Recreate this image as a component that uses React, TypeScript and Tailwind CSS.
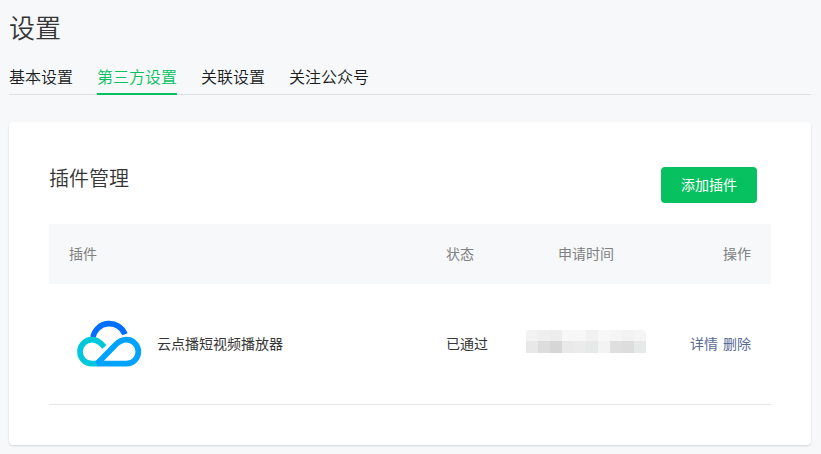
import { useState } from 'react';

interface Plugin {
  id: number;
  name: string;
  status: string;
}

const TABS = ['基本设置', '第三方设置', '关联设置', '关注公众号'];

const PLUGINS: Plugin[] = [{ id: 1, name: '云点播短视频播放器', status: '已通过' }];

// the date is masked with two rows of grey blocks
const MASK_TOP = ['bg-[#f2f2f2]', 'bg-[#efefef]', 'bg-[#ededed]', 'bg-[#f7f7f7]', 'bg-[#f7f7f7]', 'bg-[#f1f1f1]', 'bg-[#f8f8f8]', 'bg-[#f5f5f5]', 'bg-[#f2f2f2]', 'bg-[#f5f5f5]'];
const MASK_BOTTOM = ['bg-[#e8e8e8]', 'bg-[#dddddd]', 'bg-[#d6d6d6]', 'bg-[#e9e9e9]', 'bg-[#ebebeb]', 'bg-[#e7e8e8]', 'bg-[#f3f3f3]', 'bg-[#dfdfdf]', 'bg-[#dddddd]', 'bg-[#e7e9e8]'];

function CloudLogo() {
  return (
    <svg className="size-20 shrink-0" viewBox="12 -18 240 240" fill="none" strokeWidth="17" aria-hidden="true">
      <path d="M84 82 A50 50 0 0 1 180 73" stroke="#006eff" />
      <path d="M118 111 C108 99 96 89 81 89 A36 36 0 0 0 81 161 H96" stroke="#00c8dc" />
      <path d="M96 161 H184 A36 36 0 0 0 184 89 C170 89 160 96 151 105 L96 161" stroke="#00a3ff" strokeLinejoin="bevel" />
    </svg>
  );
}

function MaskedDate() {
  return (
    <div className="mx-auto w-[120px] overflow-hidden rounded-t" role="img" aria-label="申请时间">
      <div className="flex">
        {MASK_TOP.map((color, i) => (
          <span key={i} className={`h-[11px] w-3 ${color}`} />
        ))}
      </div>
      <div className="flex">
        {MASK_BOTTOM.map((color, i) => (
          <span key={i} className={`h-3 w-3 ${color}`} />
        ))}
      </div>
    </div>
  );
}

export default function App() {
  const [activeTab, setActiveTab] = useState(1);

  return (
    <div className="min-h-screen bg-[#f6f8fa] pt-[7px] pr-2.5 pb-2 pl-[9px] font-['Noto_Sans_CJK_SC',sans-serif] text-sm text-[#353535]">
      <h1 className="text-[26px] leading-10 font-[350]">设置</h1>

      <nav className="mt-4 flex h-8 gap-6 border-b border-[#e0e1e3]">
        {TABS.map((tab, i) => (
          <button
            key={tab}
            type="button"
            onClick={() => setActiveTab(i)}
            className={`h-8 border-b-2 pb-1 text-base leading-6 font-[350] ${i === activeTab ? 'border-[#07c160] text-[#07c160]' : 'border-transparent text-[#1a1b1c]'}`}
          >
            {tab}
          </button>
        ))}
      </nav>

      <main className="mt-[27px] rounded bg-white p-10 shadow-[0_1px_2px_rgba(0,0,0,0.15)]">
        <div className="flex items-start justify-between pr-3.5">
          <h2 className="text-xl leading-8 font-[350]">插件管理</h2>
          <button type="button" className="mt-[5px] h-9 w-24 rounded bg-[#07c160] pb-0.5 text-white">
            添加插件
          </button>
        </div>

        <table className="mt-[21px] w-full table-fixed">
          <thead>
            <tr className="h-[60px] bg-[#f6f8fa] text-[#808080]">
              <th className="px-5 pb-0.5 text-left font-normal">插件</th>
              <th className="w-20 pb-0.5 pl-5 text-left font-normal">状态</th>
              <th className="w-40 px-5 pb-0.5 text-center font-normal">申请时间</th>
              <th className="w-[105px] pr-5 pb-0.5 text-right font-normal">操作</th>
            </tr>
          </thead>
          <tbody>
            {PLUGINS.map((plugin) => (
              <tr key={plugin.id} className="h-[120px] border-b border-[#e4e5e7]">
                <td className="px-5">
                  <div className="flex items-center gap-2">
                    <CloudLogo />
                    <span className="pb-0.5">{plugin.name}</span>
                  </div>
                </td>
                <td className="pb-0.5 pl-5">{plugin.status}</td>
                <td className="px-5 pb-1">
                  <MaskedDate />
                </td>
                <td className="pr-5 pb-0.5 text-[#576b95]">
                  <div className="flex justify-end gap-[5px]">
                    <a href="#detail">详情</a>
                    <a href="#delete">删除</a>
                  </div>
                </td>
              </tr>
            ))}
          </tbody>
        </table>
      </main>
    </div>
  );
}
